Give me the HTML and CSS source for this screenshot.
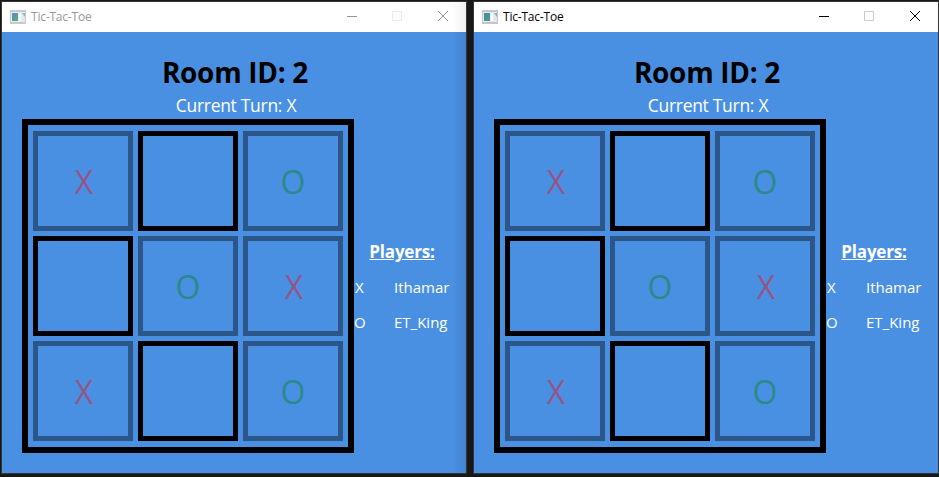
FILE: index.html
```html
<!DOCTYPE html>
<html lang="en">
<head>
<meta charset="utf-8">
<title>Tic-Tac-Toe</title>
<link rel="stylesheet" href="styles.css">
</head>
<body>
<main class="desktop">
  <section class="window inactive">
    <header class="titlebar">
      <svg class="app-icon" width="16" height="14" viewBox="0 0 16 14"><defs><linearGradient id="g1" x2="1" y2="1"><stop stop-color="#4a7fb5"/><stop offset="1" stop-color="#45a878"/></linearGradient></defs><path fill="#c3c5ca" d="M0 0h16v14H0z"/><path fill="#e9eaec" d="M1 2h14v10H1z"/><path fill="url(#g1)" d="M2 3h6v8H2z"/><path fill="#f8f8f8" d="M9 3h2v8H9z"/><path fill="#e3e5e8" d="M12 3h3v8h-3z"/><path fill="#7fb5c0" d="M12 3h3v4z"/></svg>
      <span class="caption">Tic-Tac-Toe</span>
      <svg class="controls" width="138" height="30" viewBox="0 0 138 30" fill="none" shape-rendering="crispEdges"><path class="stroke" d="M19 14.5h10"/><path class="maximize" d="M64.500 9.500h9v9h-9z"/><path class="stroke close" d="M110 9l10 10M120 9l-10 10"/></svg>
    </header>
    <div class="content">
      <h1>Room ID: 2</h1>
      <p class="turn">Current Turn: X</p>
      <div class="game">
        <div class="board">
          <div class="cell taken x">X</div><div class="cell"></div><div class="cell taken o">O</div>
          <div class="cell"></div><div class="cell taken o">O</div><div class="cell taken x">X</div>
          <div class="cell taken x">X</div><div class="cell"></div><div class="cell taken o">O</div>
        </div>
        <aside class="players">
          <h2>Players:</h2>
          <div class="player"><span class="mark mark-x">X</span><span class="name">Ithamar</span></div>
          <div class="player"><span class="mark">O</span><span class="name">ET_King</span></div>
        </aside>
      </div>
    </div>
  </section>
  <section class="window">
    <header class="titlebar">
      <svg class="app-icon" width="16" height="14" viewBox="0 0 16 14"><path fill="#c3c5ca" d="M0 0h16v14H0z"/><path fill="#e9eaec" d="M1 2h14v10H1z"/><path fill="url(#g1)" d="M2 3h6v8H2z"/><path fill="#f8f8f8" d="M9 3h2v8H9z"/><path fill="#e3e5e8" d="M12 3h3v8h-3z"/><path fill="#7fb5c0" d="M12 3h3v4z"/></svg>
      <span class="caption">Tic-Tac-Toe</span>
      <svg class="controls" width="138" height="30" viewBox="0 0 138 30" fill="none" shape-rendering="crispEdges"><path class="stroke" d="M19 14.500h10"/><path class="maximize" d="M64.500 9.500h9v9h-9z"/><path class="stroke close" d="M110 9l10 10M120 9l-10 10"/></svg>
    </header>
    <div class="content">
      <h1>Room ID: 2</h1>
      <p class="turn">Current Turn: X</p>
      <div class="game">
        <div class="board">
          <div class="cell taken x">X</div><div class="cell"></div><div class="cell taken o">O</div>
          <div class="cell"></div><div class="cell taken o">O</div><div class="cell taken x">X</div>
          <div class="cell taken x">X</div><div class="cell"></div><div class="cell taken o">O</div>
        </div>
        <aside class="players">
          <h2>Players:</h2>
          <div class="player"><span class="mark mark-x">X</span><span class="name">Ithamar</span></div>
          <div class="player"><span class="mark">O</span><span class="name">ET_King</span></div>
        </aside>
      </div>
    </div>
  </section>
</main>
</body>
</html>
```
FILE: styles.css
```css
* { box-sizing: border-box; margin: 0; }
body {
  width: 939px;
  height: 477px;
  overflow: hidden;
  background: #181818;
  font-family: "Open Sans", "Noto Sans", sans-serif;
}
.desktop { display: flex; gap: 6px; padding: 1px 0 0 1px; }
.window {
  flex: none;
  width: 466px;
  height: 473px;
  border: 1px solid #353535;
  background: #4a90e2;
}
.inactive .content {
  background: linear-gradient(to right, transparent 450px, rgba(0, 0, 0, .08));
}
.inactive .titlebar {
  background: linear-gradient(to right, #fff 450px, #f0f0f0);
}
.titlebar {
  display: flex;
  align-items: center;
  height: 30px;
  padding-left: 8px;
  background: #fff;
}
.app-icon { margin-right: 5px; }
.inactive .app-icon { opacity: .9; }
.caption { font-size: 12px; line-height: 30px; letter-spacing: -.2px; color: #000; }
.inactive .caption { color: #999; }
.controls { margin-left: auto; }
.stroke { stroke: #000; }
.inactive .stroke { stroke: #999; }
.close { shape-rendering: auto; }
.maximize { stroke: #ccc; }
.inactive .maximize { stroke: #ebebeb; }
.content { height: 441px; padding: 22px 0 0 20px; color: #fff; }
h1 {
  width: 426px;
  height: 36px;
  font-size: 28px;
  line-height: 36px;
  letter-spacing: -.3px;
  text-align: center;
  color: #000;
}
.turn {
  width: 428px;
  height: 29px;
  font-size: 17.5px;
  line-height: 31px;
  letter-spacing: -.3px;
  text-align: center;
}
.game { display: flex; }
.board {
  flex: none;
  display: grid;
  grid-template-columns: repeat(3, 100px);
  grid-template-rows: repeat(3, 100px);
  gap: 5px;
  width: 332px;
  height: 334px;
  padding: 6px 5px;
  border: 6px solid #000;
}
.cell {
  border: 5px solid #000;
  font-size: 32px;
  font-weight: 400;
  line-height: 91px;
  text-align: center;
}
.taken { opacity: .4; }
.x { padding-left: 2px; color: #f00; }
.o { color: #008000; }
.players { width: 96px; padding-top: 120px; }
h2 {
  height: 25px;
  margin-bottom: 6px;
  font-size: 17px;
  line-height: 25px;
  letter-spacing: -.2px;
  text-align: center;
  text-decoration: underline;
}
.player { display: flex; height: 35px; font-size: 15px; line-height: 35px; }
.mark { width: 40px; }
.mark-x { padding-left: 1px; }
```
